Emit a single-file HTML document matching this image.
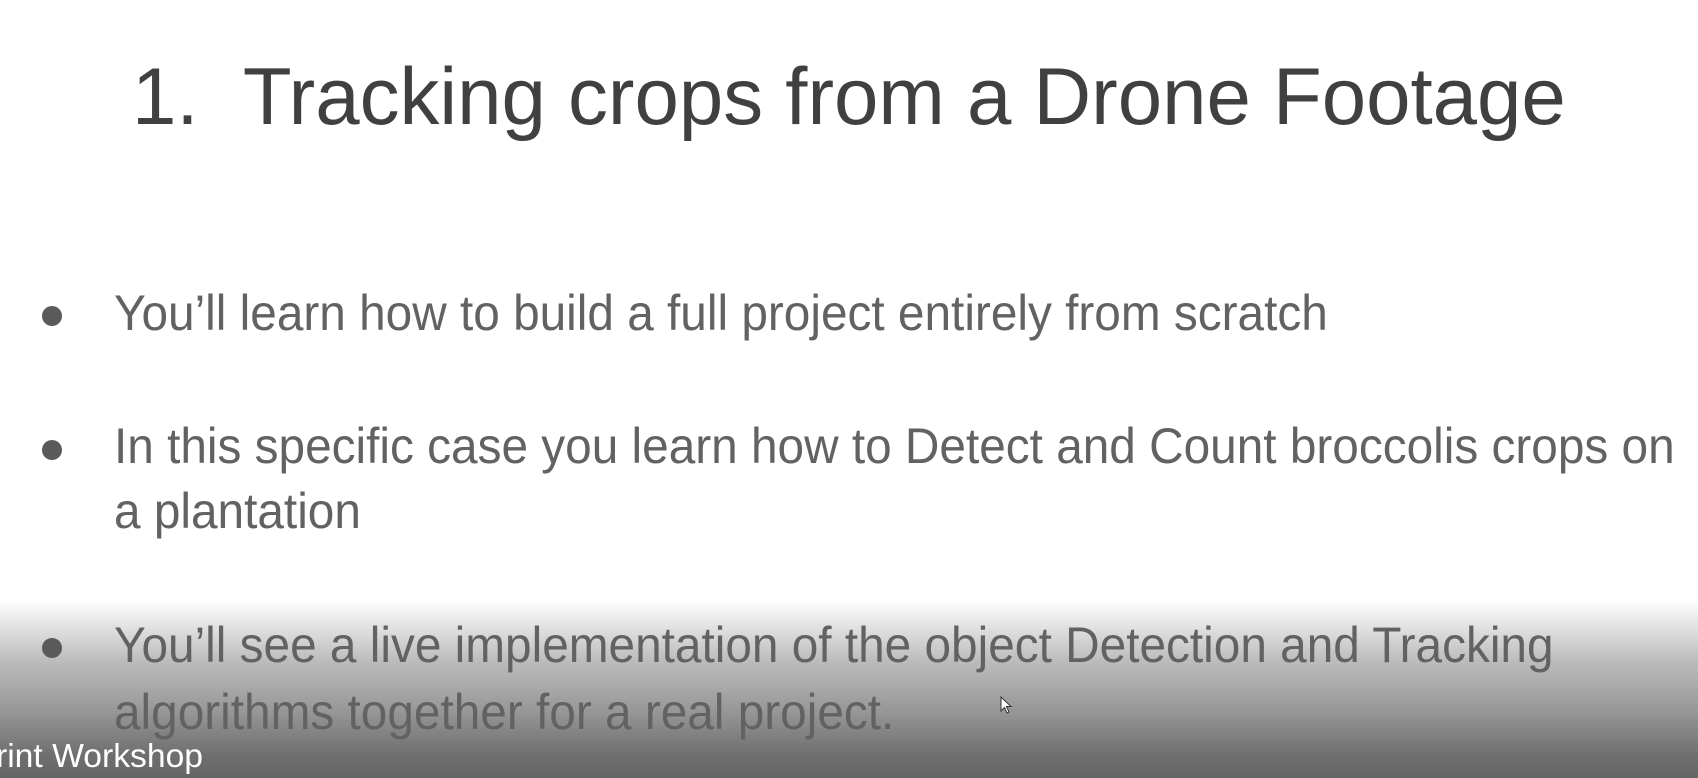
<!DOCTYPE html>
<html><head><meta charset="utf-8"><style>
html,body{margin:0;padding:0;}
body{width:1698px;height:778px;position:relative;overflow:hidden;background:#fff;font-family:"Liberation Sans",sans-serif;}
.grad{position:absolute;left:0;top:600px;width:1698px;height:178px;background:linear-gradient(#ffffff 0px,#e4e4e4 25px,#bdbdbd 60px,#989898 110px,#6f6f6f 155px,#666 178px);}
.t{position:absolute;white-space:nowrap;transform-origin:0 0;line-height:1;}
.title{font-size:81px;color:#404040;left:132px;top:57px;transform:scaleX(0.985);}
.b{font-size:50px;color:#626262;font-weight:normal;left:114px;transform:scaleX(0.955);}
.dot{position:absolute;left:42px;width:20px;height:20px;border-radius:50%;background:#5a5a5a;}
.foot{position:absolute;left:-4px;top:739px;font-size:33px;color:#fff;white-space:nowrap;transform:scaleX(1.02);transform-origin:0 0;line-height:1;}
</style></head><body>
<div class="grad"></div>
<div class="t title">1.&nbsp;&nbsp;Tracking crops from a Drone Footage</div>
<div class="dot" style="top:306px"></div>
<div class="t b" style="top:288px">You’ll learn how to build a full project entirely from scratch</div>
<div class="dot" style="top:440px"></div>
<div class="t b" style="top:421px">In this specific case you learn how to Detect and Count broccolis crops on</div>
<div class="t b" style="top:486px">a plantation</div>
<div class="dot" style="top:638px"></div>
<div class="t b" style="top:620px">You’ll see a live implementation of the object Detection and Tracking</div>
<div class="t b" style="top:687px">algorithms together for a real project.</div>
<svg style="position:absolute;left:1000px;top:696px" width="14" height="20" viewBox="0 0 14 20"><path d="M1 1 L1 15 L4.5 11.5 L7 17 L9 16 L6.5 10.5 L11 10.5 Z" fill="#fff" stroke="#333" stroke-width="1"/></svg>
<div class="foot">rint Workshop</div>
</body></html>
